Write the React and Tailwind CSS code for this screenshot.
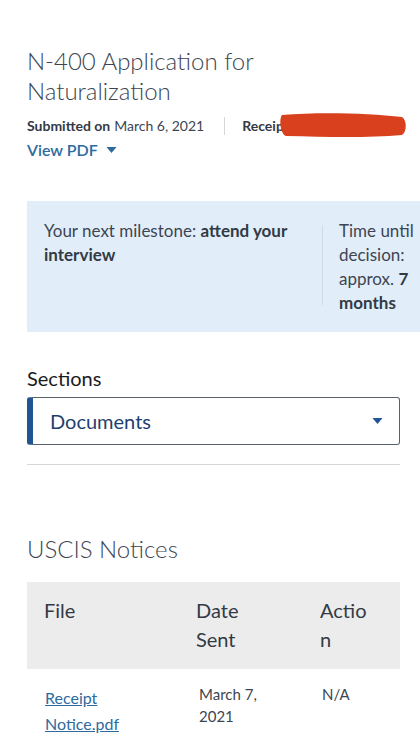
import React from "react";

const font = { fontFamily: "Lato, 'Open Sans', sans-serif" };

function Caret({ className }) {
  return (
    <svg viewBox="0 0 10 6" className={className} fill="currentColor">
      <path d="M0 0h10L5 6z" />
    </svg>
  );
}

export default function App() {
  return (
    <div className="min-h-[750px] w-[420px] overflow-hidden bg-white pl-[27px] text-[#323a45]" style={font}>
      {/* Header */}
      <div className="pt-[46px] pr-5">
        <h1 className="text-[24px] font-light leading-[30px] text-[#3d4551]">
          N-400 Application for<br />Naturalization
        </h1>
        <div className="mt-[10px] flex items-center text-[14px] leading-5">
          <span className="font-bold text-[#323a45]">Submitted on</span>
          <span className="ml-1 text-[#3d4551]">March 6, 2021</span>
          <span className="ml-[20px] mr-[17px] h-[18px] w-px bg-[#d6d7d9]" />
          <span className="relative font-bold text-[#323a45]">
            Receipt
            <svg viewBox="0 0 130 28" className="absolute left-[36px] top-[-4px] h-[28px] w-[130px]">
              <path d="M4 3 C40 0 90 1 124 5 C129 8 129 20 124 23 C90 26 50 25 8 24 C2 22 1 6 4 3z" fill="#d8401e" />
            </svg>
          </span>
        </div>
        <button className="mt-[2px] flex items-center gap-2 text-[16px] font-semibold leading-6 text-[#2e6a9e]">
          View PDF
          <Caret className="h-[6px] w-[11px]" />
        </button>
      </div>

      {/* Milestone */}
      <div className="mt-[39px] flex h-[131px] bg-[#e1eefa] pt-[18px] text-[17px] leading-6 text-[#3d4551]">
        <p className="w-[295px] shrink-0 pl-[17px] pr-3">
          Your next milestone: <span className="font-bold text-[#323a45]">attend your interview</span>
        </p>
        <div className="mt-[6px] h-[80px] w-px shrink-0 bg-[#cfdbe6]" />
        <p className="w-[100px] shrink-0 pl-[16px]">
          Time until decision: approx. <span className="font-bold text-[#323a45]">7 months</span>
        </p>
      </div>

      {/* Sections */}
      <div className="mt-[34px] w-[373px]">
        <div className="text-[20px] leading-6 text-[#1b1b1b]">Sections</div>
        <div className="mt-[7px] flex h-[48px] items-center justify-between rounded-[3px] border border-[#5b616b] border-l-[6px] border-l-[#205493] pl-[17px] pr-[16px]">
          <span className="text-[20px] text-[#1e3f6e]">Documents</span>
          <Caret className="h-[6px] w-[11px] text-[#205493]" />
        </div>
        <div className="mt-[19px] h-px bg-[#d6d7d9]" />
      </div>

      {/* Notices */}
      <h2 className="mt-[68px] text-[24px] font-light leading-8 text-[#3d4551]">USCIS Notices</h2>
      <table className="mt-[17px] w-[373px] table-fixed text-left">
        <thead>
          <tr className="bg-[#ececec] text-[20px] font-normal leading-[29px] text-[#323a45]">
            <th className="w-[169px] pb-[15px] pl-[17px] pt-[14px] align-top font-normal">File</th>
            <th className="w-[124px] pb-[15px] pt-[14px] align-top font-normal">Date<br />Sent</th>
            <th className="pb-[15px] pt-[14px] align-top font-normal">Actio<br />n</th>
          </tr>
        </thead>
        <tbody>
          <tr className="align-top">
            <td className="pl-[18px] pt-[16px] text-[16px] leading-[26px]">
              <a href="#" className="text-[#2e6a9e] underline">Receipt<br />Notice.pdf</a>
            </td>
            <td className="pl-[3px] pt-[14px] text-[15px] leading-[22px] text-[#3d4551]">March 7,<br />2021</td>
            <td className="pl-[2px] pt-[14px] text-[15px] leading-[22px] text-[#3d4551]">N/A</td>
          </tr>
        </tbody>
      </table>
    </div>
  );
}
